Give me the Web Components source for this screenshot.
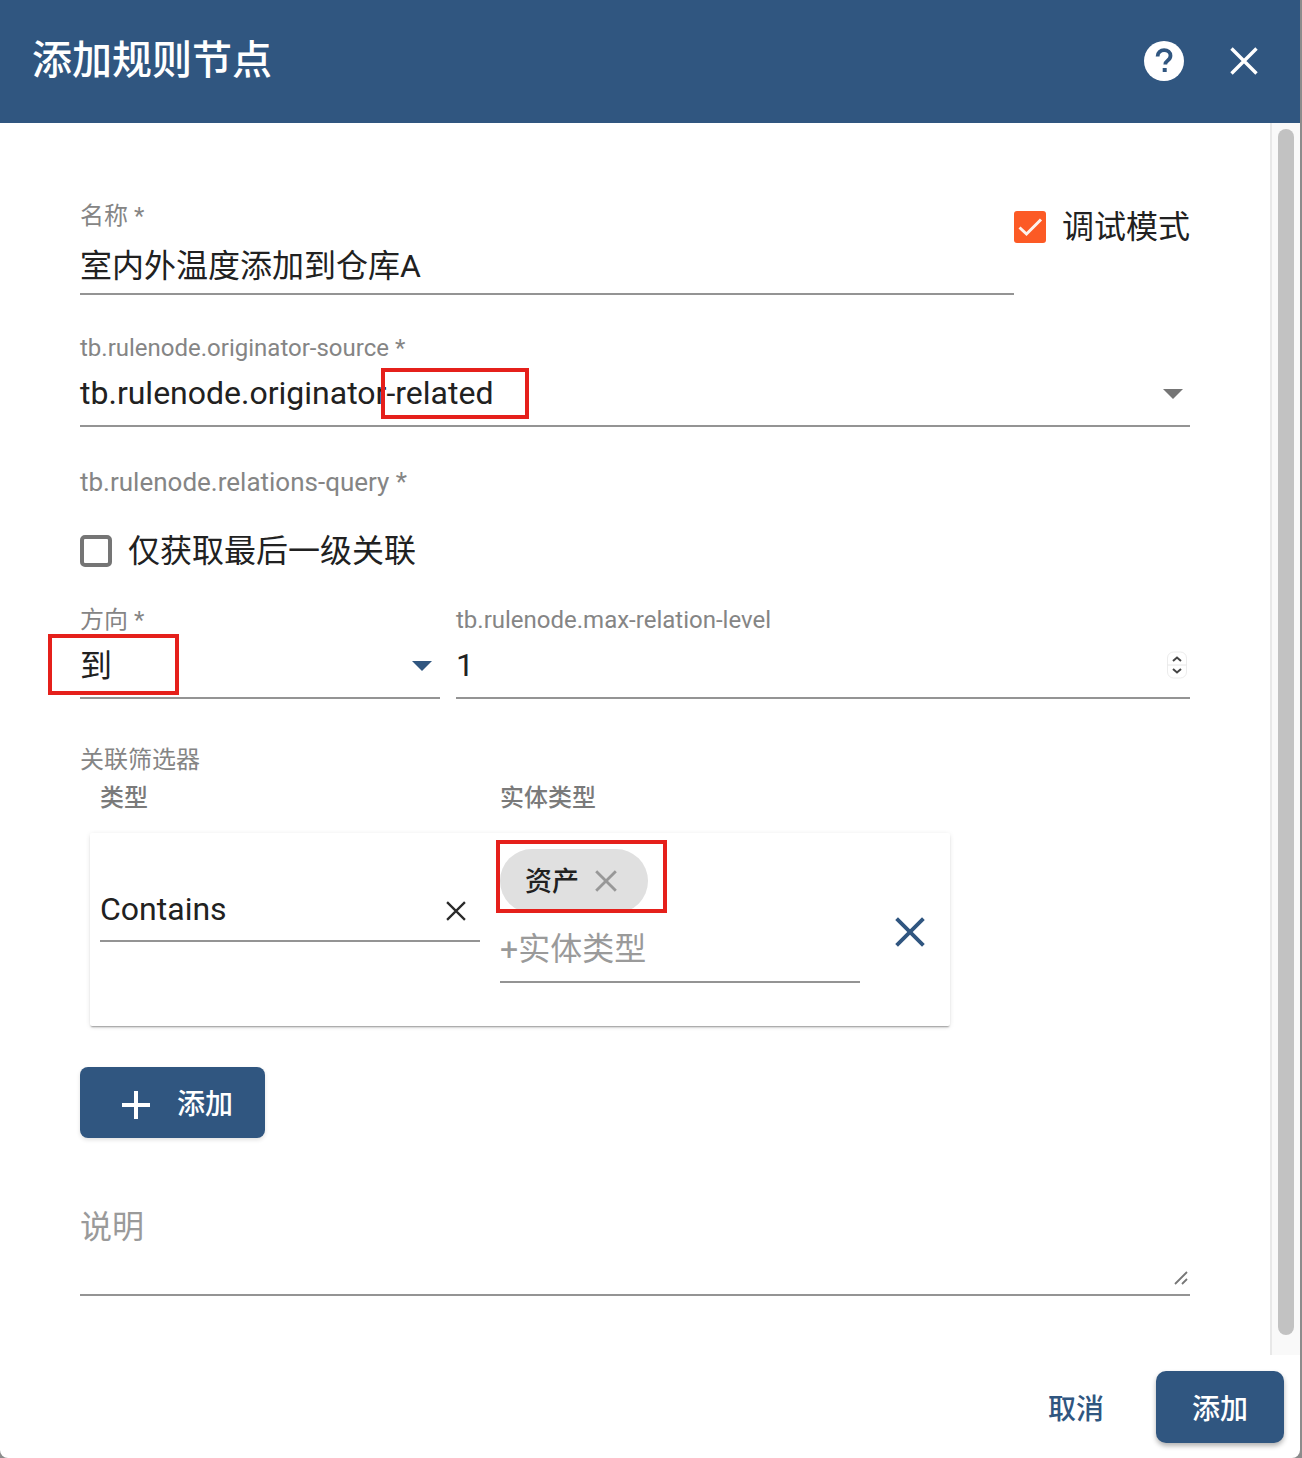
<!DOCTYPE html>
<html lang="zh">
<head>
<meta charset="utf-8">
<title>添加规则节点</title>
<style>
  html, body { margin: 0; padding: 0; height: 1458px; background: #8c8c8c; overflow: hidden; }
  body { font-family: Roboto, "Noto Sans CJK SC", sans-serif; }
</style>
</head>
<body>
<rule-dialog>
  <span slot="title">添加规则节点</span>

  <div style="display:flex">
    <tb-field label="名称 *" value="室内外温度添加到仓库A" style="flex:1;margin-top:1px;--gap:14px;--pad:5px"></tb-field>
    <tb-checkbox checked style="width:176px;margin-top:10px">调试模式</tb-checkbox>
  </div>

  <tb-field label="tb.rulenode.originator-source *" value="tb.rulenode.originator-related" arrow="#757575" style="margin-top:39px;--arrow-mr:7px;--arrow-mt:1px"></tb-field>

  <tb-label style="margin-top:41px;font-size:26px">tb.rulenode.relations-query *</tb-label>

  <tb-checkbox style="margin-top:39px">仅获取最后一级关联</tb-checkbox>

  <div style="display:flex;gap:16px;margin-top:39px">
    <tb-field label="方向 *" value="到" arrow="#305680" style="width:360px;--gap:10px;--pad:9px;--arrow-mt:-1px"></tb-field>
    <tb-field label="tb.rulenode.max-relation-level" value="1" spinner style="flex:1;--pad:10px"></tb-field>
  </div>

  <tb-label style="margin-top:47px">关联筛选器</tb-label>

  <div style="display:flex;margin-top:10px;padding-left:20px">
    <tb-label strong style="width:400px">类型</tb-label>
    <tb-label strong>实体类型</tb-label>
  </div>

  <filter-card style="margin-top:21px"></filter-card>

  <tb-button raised style="margin-top:41px">添加</tb-button>

  <tb-field value="说明" muted resize style="margin-top:67px;--gap:0px;--pad:45px"></tb-field>

  <tb-annotation style="left:381px;top:245px;width:148px;height:51px"></tb-annotation>
  <tb-annotation style="left:48px;top:511px;width:131px;height:61px"></tb-annotation>
  <tb-annotation style="left:496px;top:717px;width:171px;height:73px"></tb-annotation>

  <tb-button slot="footer" flat>取消</tb-button>
  <tb-button slot="footer" primary>添加</tb-button>
</rule-dialog>

<script>
const FONT = 'Roboto, "Noto Sans CJK SC", sans-serif';

const closeIcon = (size, color, width) => `
  <svg width="${size}" height="${size}" viewBox="0 0 28 28" fill="none" stroke="${color}" stroke-width="${width}">
    <path d="M1.5 1.5 26.5 26.5M26.5 1.5 1.5 26.5"/>
  </svg>`;

class RuleDialog extends HTMLElement {
  constructor() {
    super();
    this.attachShadow({ mode: 'open' });
    this.shadowRoot.innerHTML = `
      <style>
        :host {
          display: flex;
          flex-direction: column;
          width: 1300px;
          height: 1458px;
          background: #fff;
          border-radius: 0 0 8px 8px;
          overflow: hidden;
          font-family: ${FONT};
        }
        header {
          flex: none;
          height: 123px;
          box-sizing: border-box;
          display: flex;
          align-items: center;
          padding: 0 42px 2px 32px;
          background: #305680;
          color: #fff;
        }
        h2 {
          flex: 1;
          margin: 0;
          font-size: 40px;
          line-height: 56px;
          font-weight: 500;
        }
        .help { width: 40px; height: 40px; margin-right: 46px; }
        .close { display: flex; }
        .middle { flex: none; height: 1232px; display: flex; }
        .scroll {
          position: relative;
          flex: 1;
          box-sizing: border-box;
          padding: 78px 80px 0 80px;
        }
        .track {
          flex: none;
          width: 30px;
          box-sizing: border-box;
          padding: 6px 6px 20px 6px;
          background: #f9f9f9;
          border-left: 2px solid #e8e8e8;
        }
        .thumb { width: 16px; height: 1206px; border-radius: 8px; background: #c2c2c2; }
        footer {
          flex: 1;
          display: flex;
          justify-content: flex-end;
          align-items: flex-start;
          gap: 52px;
          padding: 16px 16px 0 0;
        }
      </style>
      <header>
        <h2><slot name="title"></slot></h2>
        <svg class="help" viewBox="0 0 40 40">
          <circle cx="20" cy="20" r="20" fill="#fff"/>
          <path d="M13.6 15.4c0-3.7 2.9-6.2 6.5-6.2 3.7 0 6.4 2.4 6.4 5.6 0 2.3-1.2 3.6-3 4.9-1.7 1.2-2.2 2-2.2 3.9" fill="none" stroke="#305680" stroke-width="3.8"/>
          <rect x="18.7" y="27" width="4" height="4" fill="#305680"/>
        </svg>
        <span class="close">${closeIcon(28, '#fff', 3.4)}</span>
      </header>
      <div class="middle">
        <div class="scroll"><slot></slot></div>
        <div class="track"><div class="thumb"></div></div>
      </div>
      <footer><slot name="footer"></slot></footer>
    `;
  }
}

class TbLabel extends HTMLElement {
  constructor() {
    super();
    this.attachShadow({ mode: 'open' });
    this.shadowRoot.innerHTML = `
      <style>
        :host {
          display: block;
          height: 28px;
          font-size: 24px;
          line-height: 28px;
          color: #858585;
          white-space: nowrap;
        }
        :host([strong]) { font-weight: 500; color: #7a7a7a; }
      </style>
      <slot></slot>
    `;
  }
}

class TbField extends HTMLElement {
  constructor() {
    super();
    this.attachShadow({ mode: 'open' });
    const label = this.getAttribute('label');
    const arrow = this.getAttribute('arrow');
    this.shadowRoot.innerHTML = `
      <style>
        :host { display: block; position: relative; }
        .label {
          height: 28px;
          font-size: 24px;
          line-height: 28px;
          color: #858585;
          white-space: nowrap;
        }
        .value {
          display: flex;
          align-items: center;
          justify-content: space-between;
          height: 44px;
          margin-top: var(--gap, 9px);
          padding-bottom: var(--pad, 10px);
          border-bottom: 2px solid #949494;
          font-size: 32px;
          line-height: 44px;
          color: #212121;
          white-space: nowrap;
        }
        :host([muted]) .value { color: #9a9a9a; }
        .arrow {
          width: 0;
          height: 0;
          margin-top: var(--arrow-mt, 0);
          margin-right: var(--arrow-mr, 8px);
          border: 10px solid transparent;
          border-bottom: 0;
        }
        .spin { display: flex; margin-right: 2px; }
        .resize { position: absolute; right: 1px; bottom: 10px; display: flex; }
      </style>
      ${label ? `<div class="label">${label}</div>` : ''}
      <div class="value">
        <span>${this.getAttribute('value')}</span>
        ${arrow ? `<span class="arrow" style="border-top:10px solid ${arrow}"></span>` : ''}
        ${this.hasAttribute('spinner') ? `<span class="spin">
          <svg width="22" height="28" viewBox="0 0 22 28" fill="none">
            <rect x="1.5" y="1" width="19" height="26" rx="6" fill="#fff" stroke="#ececec"/>
            <path d="M1.5 14H20.5" stroke="#e6e6e6"/>
            <path d="M7 10 11 6.5 15 10M7 18 11 21.5 15 18" stroke="#444" stroke-width="2"/>
          </svg></span>` : ''}
      </div>
      ${this.hasAttribute('resize') ? `<span class="resize">
        <svg width="15" height="15" viewBox="0 0 15 15" stroke="#777" stroke-width="1.8">
          <path d="M1 13 13 1M8 13 13 8"/>
        </svg></span>` : ''}
    `;
  }
}

class TbCheckbox extends HTMLElement {
  constructor() {
    super();
    this.attachShadow({ mode: 'open' });
    const checked = this.hasAttribute('checked');
    this.shadowRoot.innerHTML = `
      <style>
        :host {
          display: flex;
          align-items: center;
          gap: 16px;
          height: 32px;
          font-size: 32px;
          line-height: 32px;
          color: #212121;
          white-space: nowrap;
        }
        .box {
          flex: none;
          box-sizing: border-box;
          width: 32px;
          height: 32px;
          border-radius: 5px;
          border: 4px solid #757575;
        }
        .box.on { border: 0; border-radius: 3px; background: #fc5a25; display: flex; }
      </style>
      <div class="box ${checked ? 'on' : ''}">
        ${checked ? `<svg width="32" height="32" viewBox="0 0 32 32" fill="none">
          <path d="M5.5 16.5 12.5 23 27 8.5" stroke="#fdf3ee" stroke-width="3"/>
        </svg>` : ''}
      </div>
      <span><slot></slot></span>
    `;
  }
}

class EntityChip extends HTMLElement {
  constructor() {
    super();
    this.attachShadow({ mode: 'open' });
    this.shadowRoot.innerHTML = `
      <style>
        :host {
          display: flex;
          align-items: center;
          width: 147px;
          height: 64px;
          box-sizing: border-box;
          padding-left: 24px;
          gap: 16px;
          border-radius: 32px;
          background: #e0e0e0;
          font-size: 27px;
          font-weight: 500;
          color: #212121;
          white-space: nowrap;
        }
        span { margin: 0 0 4px 1px; }
        svg { display: block; }
      </style>
      <span><slot></slot></span>
      ${closeIcon(22, '#989898', 3.6)}
    `;
  }
}

class FilterCard extends HTMLElement {
  constructor() {
    super();
    this.attachShadow({ mode: 'open' });
    this.shadowRoot.innerHTML = `
      <style>
        :host {
          display: flex;
          width: 860px;
          height: 193px;
          box-sizing: border-box;
          margin-left: 10px;
          padding: 16px 0 0 10px;
          background: #fff;
          border-radius: 2px;
          box-shadow: 0 2px 2px -1px rgba(0,0,0,.38), 0 1px 5px rgba(0,0,0,.1);
        }
        .type {
          position: relative;
          width: 380px;
          height: 55px;
          margin: 38px 20px 0 0;
        }
        .type .x { position: absolute; right: 14px; top: 14px; display: flex; }
        .entity { width: 360px; }
        .remove { display: flex; margin: 68px 0 0 35px; }
      </style>
      <div class="type">
        <tb-field value="Contains" style="--gap:0px;--pad:9px"></tb-field>
        <span class="x">${closeIcon(20, '#2a2a2a', 3.2)}</span>
      </div>
      <div class="entity">
        <entity-chip style="width:148px">资产</entity-chip>
        <tb-field value="+实体类型" muted style="--gap:14px;--pad:10px"></tb-field>
      </div>
      <span class="remove">${closeIcon(30, '#305680', 3.6)}</span>
    `;
  }
}

class TbButton extends HTMLElement {
  constructor() {
    super();
    this.attachShadow({ mode: 'open' });
    const raised = this.hasAttribute('raised');
    this.shadowRoot.innerHTML = `
      <style>
        :host {
          display: flex;
          align-items: center;
          box-sizing: border-box;
          font-size: 28px;
          font-weight: 500;
          white-space: nowrap;
        }
        :host([raised]) {
          width: 185px;
          height: 71px;
          gap: 27px;
          padding-left: 42px;
          border-radius: 8px;
          background: #305680;
          color: #fff;
          box-shadow: 0 2px 4px rgba(0,0,0,.12);
        }
        :host([primary]) {
          justify-content: center;
          width: 128px;
          height: 72px;
          border-radius: 10px;
          background: #305680;
          color: #fff;
          box-shadow: 0 3px 5px rgba(0,0,0,.3);
        }
        :host([flat]) { height: 72px; color: #305680; }
        :host([raised]) span { margin-bottom: 2px; }
        svg { display: block; margin-top: 4px; }
      </style>
      ${raised ? `<svg width="28" height="28" viewBox="0 0 28 28" stroke="#fff" stroke-width="4"><path d="M0 14H28M14 0V28"/></svg>` : ''}
      <span><slot></slot></span>
    `;
  }
}

// red boxes drawn over the form in the reference
class TbAnnotation extends HTMLElement {
  constructor() {
    super();
    this.attachShadow({ mode: 'open' });
    this.shadowRoot.innerHTML = `
      <style>
        :host {
          position: absolute;
          box-sizing: border-box;
          border: 4px solid #e5201b;
          pointer-events: none;
        }
      </style>
    `;
  }
}

customElements.define('rule-dialog', RuleDialog);
customElements.define('tb-label', TbLabel);
customElements.define('tb-field', TbField);
customElements.define('tb-checkbox', TbCheckbox);
customElements.define('entity-chip', EntityChip);
customElements.define('filter-card', FilterCard);
customElements.define('tb-button', TbButton);
customElements.define('tb-annotation', TbAnnotation);
</script>
</body>
</html>
